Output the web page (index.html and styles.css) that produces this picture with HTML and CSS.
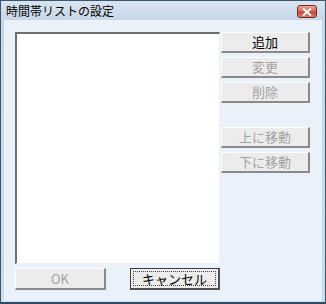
FILE: index.html
```html
<!DOCTYPE html>
<html>
<head>
<meta charset="utf-8">
<link rel="stylesheet" href="styles.css">
</head>
<body>

<div class="window">
  <div class="titlebar">
    <span class="title">時間帯リストの設定</span>
    <span class="closeBtn">
      <svg width="10" height="8" viewBox="0 0 10 8"><path d="M1 0.5 L9 7.5 M9 0.5 L1 7.5" stroke="#fff" stroke-width="2"/></svg>
    </span>
  </div>
  <div class="client">
    <div class="leftCol">
      <div class="listbox"></div>
      <div class="bottomRow">
        <span class="btn disabled wideBtn">OK</span>
        <span class="btn focused wideBtn"><span class="focusRing">キャンセル</span></span>
      </div>
    </div>
    <div class="rightCol">
      <span class="btn">追加</span>
      <span class="btn disabled">変更</span>
      <span class="btn disabled">削除</span>
      <span class="btn disabled spaced">上に移動</span>
      <span class="btn disabled">下に移動</span>
    </div>
  </div>
</div>

</body>
</html>
```

FILE: styles.css
```css
body {
  margin: 0;
  font-family: "Noto Sans CJK JP", "DejaVu Sans", sans-serif;
  font-size: 12px;
}

* {
  box-sizing: border-box;
}

/* Outer dialog frame */
.window {
  width: 326px;
  height: 304px;
  border: 1px solid #3a5673;
  border-bottom: 2px solid #2f4a63;
  background: linear-gradient(#d9e4f0, #c6d6e7 20px, #cfdcea);
  display: flex;
  flex-direction: column;
}

.titlebar {
  height: 19px;
  display: flex;
  align-items: center;
  justify-content: space-between;
  padding: 0 8px 0 5px;
}

.title {
  color: #000;
  font-size: 12px;
  line-height: 14px;
}

.closeBtn {
  width: 20px;
  height: 13px;
  margin-top: 2px;
  border: 1px solid #7a2b22;
  border-radius: 3px;
  background: linear-gradient(#e9a99a, #d1604e 50%, #c04632 55%, #d9806a);
  display: flex;
  align-items: center;
  justify-content: center;
}

.closeBtn svg {
  display: block;
}

/* Client area */
.client {
  flex: 1;
  margin: 0 2px 1px 3px;
  border-right: 1px solid #b8dcf0;
  background: #eaf1f9;
  display: flex;
  padding: 12px 0 0 11px;
}

.leftCol {
  width: 205px;
  display: flex;
  flex-direction: column;
}

.listbox {
  height: 232px;
  background: #fff;
  border-top: 2px solid #6e6e6e;
  border-left: 2px solid #6e6e6e;
  border-right: 1px solid #f0f0f0;
  border-bottom: 1px solid #f0f0f0;
}

.bottomRow {
  display: flex;
  justify-content: space-between;
  margin-top: 4px;
}

.rightCol {
  margin-left: 1px;
  display: flex;
  flex-direction: column;
  gap: 4px;
}

/* Classic 3D push buttons */
.btn {
  width: 89px;
  height: 21px;
  background: #ececec;
  border-top: 1px solid #fdfdfd;
  border-left: 1px solid #fdfdfd;
  border-right: 2px solid #8a8a8a;
  border-bottom: 2px solid #8a8a8a;
  color: #000;
  font-size: 13px;
  display: flex;
  align-items: center;
  justify-content: center;
  line-height: 14px;
}

.wideBtn {
  width: 91px;
  height: 22px;
}

.disabled {
  color: #a3a3a3;
}

.spaced {
  margin-top: 20px;
}

.focused {
  width: 90px;
  border: 1px solid #3c3c3c;
  border-right: 2px solid #505050;
  border-bottom: 2px solid #505050;
  padding: 2px;
}

.focusRing {
  flex: 1;
  align-self: stretch;
  border: 1px dotted #444;
  display: flex;
  align-items: center;
  justify-content: center;
}
```
